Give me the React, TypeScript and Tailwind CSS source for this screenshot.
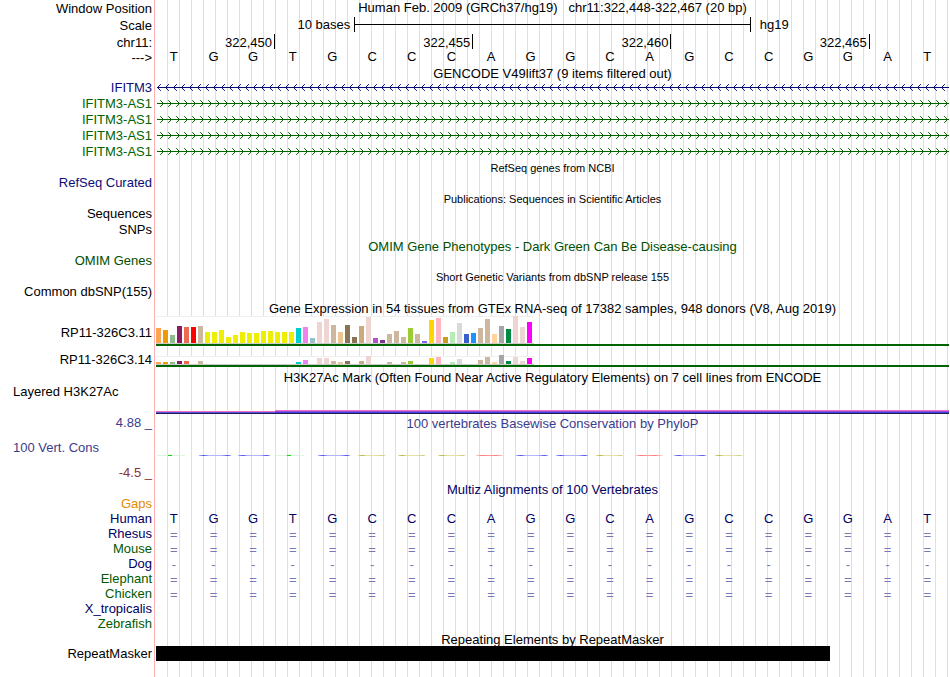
import type { ReactNode } from 'react';
import clsx from 'clsx';

const BASES = 'TGGTGCCCAGGCAGCCGGAT'.split('');

type Expression = { color: string; upper: number; lower: number };

const bar = (color: string, upper: number, lower = 0): Expression => ({ color, upper, lower });

// One bar per GTEx tissue, heights in pixels for the two genes
const TISSUES: Expression[] = [
    bar('#ffa54f', 15, 2),
    bar('#ee9a00', 13, 2),
    bar('#8fbc8f', 8, 2),
    bar('#8b1c62', 17, 3),
    bar('#ee6a50', 16, 3),
    bar('#ff0000', 16),
    bar('#cdb79e', 17, 3),
    ...[11, 11, 13, 6, 8, 11, 10, 10, 12, 12, 11, 11, 11].map((h) => bar('#eeee00', h)),
    bar('#00cdcd', 15, 2),
    bar('#ee82ee', 16, 4),
    bar('#9ac0cd', 5),
    bar('#eed5d2', 21, 6),
    bar('#eed5d2', 24, 6),
    bar('#cdb79e', 18, 3),
    bar('#eec591', 11, 2),
    bar('#8b7355', 18, 3),
    bar('#8b7355', 6),
    bar('#cdaa7d', 17, 3),
    bar('#eed5d2', 26, 8),
    bar('#b452cd', 5),
    bar('#7a378b', 3),
    bar('#cdb79e', 9, 2),
    bar('#cdb79e', 12),
    bar('#cdb79e', 6, 2),
    bar('#9acd32', 15, 3),
    bar('#cdb79e', 9),
    bar('#7a67ee', 2),
    bar('#ffd700', 23, 6),
    bar('#ffb6c1', 25, 7),
    bar('#cd9b1d', 6),
    bar('#b4eeb4', 11, 2),
    bar('#d9d9d9', 20, 5),
    bar('#3a5fcd', 9),
    bar('#1e90ff', 10),
    bar('#cdb79e', 15, 4),
    bar('#cdb79e', 24, 7),
    bar('#ffd39b', 9, 2),
    bar('#a6a6a6', 17, 9),
    bar('#008b45', 14, 3),
    bar('#eed5d2', 27, 7),
    bar('#eed5d2', 16, 3),
    bar('#ff00ff', 21, 6),
];

const CONSERVATION = [
    'green', 'blue', 'blue', 'green', 'blue', 'olive', 'olive', 'olive',
    'red', 'blue', 'blue', 'olive', 'red', 'blue', 'olive',
];

const SPECIES = [
    { name: 'Gaps', color: 'text-[#e68a00]', symbol: '' },
    { name: 'Human', color: 'text-[#000064]', symbol: 'bases' },
    { name: 'Rhesus', color: 'text-[#000064]', symbol: '=' },
    { name: 'Mouse', color: 'text-[#005a00]', symbol: '=' },
    { name: 'Dog', color: 'text-[#000064]', symbol: '-' },
    { name: 'Elephant', color: 'text-[#005a00]', symbol: '=' },
    { name: 'Chicken', color: 'text-[#005a00]', symbol: '=' },
    { name: 'X_tropicalis', color: 'text-[#000064]', symbol: '' },
    { name: 'Zebrafish', color: 'text-[#005a00]', symbol: '' },
];

type RowProps = {
    label?: string;
    labelClass?: string;
    className?: string;
    children?: ReactNode;
};

function Row({ label, labelClass, className = 'h-4 leading-4', children }: RowProps) {
    return (
        <div className={clsx('flex', className)}>
            <div className={clsx('w-[152px] shrink-0 whitespace-nowrap text-right', labelClass)}>{label}</div>
            <div className="ml-1 mr-px min-w-0 flex-1">{children}</div>
        </div>
    );
}

type TitleProps = { children: ReactNode; small?: boolean; className?: string };

function Title({ children, small, className }: TitleProps) {
    return (
        <h2 className={clsx('whitespace-pre text-center', small ? 'text-[11px]' : 'text-[13px]', className)}>
            {children}
        </h2>
    );
}

function Letters({ items, className }: { items: string[]; className?: string }) {
    return (
        <div className={clsx('-ml-0.5 mr-0.5 grid grid-cols-20 text-center', className)}>
            {items.map((item, i) => (
                <span key={i}>{item}</span>
            ))}
        </div>
    );
}

function Transcript({ id, reverse }: { id: string; reverse?: boolean }) {
    const color = reverse ? '#0c0c78' : '#006400';
    return (
        <svg className="block h-4 w-full" aria-hidden="true">
            <defs>
                <pattern id={id} width="8" height="16" patternUnits="userSpaceOnUse">
                    <path
                        d={reverse ? 'M4.5 4.5L1.5 7.5L4.5 10.5' : 'M4.5 4.5L7.5 7.5L4.5 10.5'}
                        fill="none"
                        stroke={color}
                        strokeWidth="1"
                        strokeLinecap="square"
                    />
                </pattern>
            </defs>
            <rect width="100%" height="16" fill={`url(#${id})`} />
            <rect x="1" y="7" width="100%" height="1" fill={color} />
        </svg>
    );
}

function ExpressionChart({ gene, className }: { gene: 'upper' | 'lower'; className: string }) {
    return (
        <div className="border-b-2 border-[#006400]">
            <div
                className={clsx(
                    'flex w-[378px] items-end gap-0.5 border-b border-t border-b-[#cccccc] border-t-[#f0f0f0] bg-white',
                    className,
                )}
            >
                {TISSUES.map((t, i) => (
                    <div key={i} className="w-[5px]" style={{ height: t[gene], backgroundColor: t.color }} />
                ))}
            </div>
        </div>
    );
}

export default function App() {
    return (
        <main className="min-h-screen overflow-hidden bg-white bg-[linear-gradient(to_right,#fff_0_154px,#ffb0b0_154px_155px,#fff_155px_156px,transparent_156px),repeating-linear-gradient(to_right,transparent_0_11px,#dcdcf8_11px_12px)] font-['Liberation_Sans',Arial,sans-serif] text-[13px] text-black">
            <Row label="Window Position" className="h-[17px] leading-[17px]">
                <h1 className="whitespace-pre text-center leading-[15px]">
                    {'Human Feb. 2009 (GRCh37/hg19)   chr11:322,448-322,467 (20 bp)'}
                </h1>
            </Row>
            <Row label="Scale" className="h-[17px] leading-[17px]">
                <div className="flex leading-4">
                    <span className="w-1/4 pr-1 text-right">10 bases</span>
                    <div className="flex h-[15px] w-1/2 items-center border-x border-black">
                        <div className="h-px w-full bg-black" />
                    </div>
                    <span className="pl-[9px]">hg19</span>
                </div>
            </Row>
            <Row label="chr11:" className="h-4 leading-[18px]">
                <div className="grid grid-cols-20 text-right">
                    <span className="col-span-3 h-[15px] border-r border-black pr-0.5">322,450</span>
                    <span className="col-span-5 h-[15px] border-r border-black pr-0.5">322,455</span>
                    <span className="col-span-5 h-[15px] border-r border-black pr-0.5">322,460</span>
                    <span className="col-span-5 h-[15px] border-r border-black pr-0.5">322,465</span>
                </div>
            </Row>
            <Row label="--->">
                <Letters items={BASES} className="leading-[14px]" />
            </Row>

            <Row className="h-[14px] leading-4">
                <Title>GENCODE V49lift37 (9 items filtered out)</Title>
            </Row>
            <Row label="IFITM3" labelClass="text-[#0c0c78]">
                <Transcript id="ifitm3" reverse />
            </Row>
            {[1, 2, 3, 4].map((n) => (
                <Row key={n} label="IFITM3-AS1" labelClass="text-[#006400]">
                    <Transcript id={`ifitm3-as1-${n}`} />
                </Row>
            ))}

            <Row className="h-[15px] leading-4">
                <Title small>RefSeq genes from NCBI</Title>
            </Row>
            <Row label="RefSeq Curated" labelClass="text-[#0c0c78]" />
            <Row className="h-[15px] leading-4">
                <Title small>Publications: Sequences in Scientific Articles</Title>
            </Row>
            <Row label="Sequences" />
            <Row label="SNPs" />
            <Row className="h-[15px] leading-[18px]">
                <Title className="text-[#005000]">OMIM Gene Phenotypes - Dark Green Can Be Disease-causing</Title>
            </Row>
            <Row label="OMIM Genes" labelClass="text-[#005000]" />
            <Row className="h-[15px] leading-4">
                <Title small>Short Genetic Variants from dbSNP release 155</Title>
            </Row>
            <Row label="Common dbSNP(155)" />

            <Row className="h-4 leading-[18px]">
                <Title>Gene Expression in 54 tissues from GTEx RNA-seq of 17382 samples, 948 donors (V8, Aug 2019)</Title>
            </Row>
            <Row label="RP11-326C3.11" className="h-[30px] leading-[33px]">
                <ExpressionChart gene="upper" className="h-7" />
            </Row>
            <Row label="RP11-326C3.14" className="h-[24px] leading-[27px]">
                <div className="pt-[10px]">
                    <ExpressionChart gene="lower" className="h-[9px]" />
                </div>
            </Row>

            <Row className="h-[15px] leading-4">
                <Title>H3K27Ac Mark (Often Found Near Active Regulatory Elements) on 7 cell lines from ENCODE</Title>
            </Row>
            <Row label="Layered H3K27Ac" labelClass="pl-[13px] !text-left leading-[14px]" className="h-[29px]">
                <div className="flex items-end pt-[25px]">
                    <div className="w-[15%]">
                        <div className="h-px bg-[#ee6fc8]" />
                        <div className="h-px bg-[#5a50e6]" />
                        <div className="h-px bg-[#1e1e50]" />
                    </div>
                    <div className="flex-1">
                        <div className="h-px bg-[#ee6fc8]" />
                        <div className="h-px bg-[#a048d8]" />
                        <div className="h-px bg-[#4040dc]" />
                        <div className="h-px bg-[#1e1e50]" />
                    </div>
                </div>
            </Row>

            <Row label="4.88 _" labelClass="text-[#3c3c8c]" className="h-[26px] leading-[18px]">
                <Title className="leading-5 text-[#3c3c8c]">100 vertebrates Basewise Conservation by PhyloP</Title>
            </Row>
            <Row label="100 Vert. Cons" labelClass="pl-[13px] !text-left text-[#3c3c8c]" className="h-[25px] leading-4">
                <div className="grid grid-cols-20 pt-[15px]">
                    {CONSERVATION.map((kind, i) => (
                        <div
                            key={i}
                            className={clsx('h-px', {
                                'ml-px w-7 bg-[linear-gradient(to_right,#dcf5dc_0_40%,#14dc14_40%_55%,#dcf5dc_55%)]': kind === 'green',
                                'ml-[3px] w-8 bg-[linear-gradient(to_right,#b4b4ff,#5050f0_15%,#b4b4ff_30%,#b4b4ff_70%,#5050f0_90%,#b4b4ff)]': kind === 'blue',
                                'ml-1 w-7 bg-[linear-gradient(to_right,#e1e1aa,#b4b43c_15%,#e1e1aa_30%,#e1e1aa_70%,#cdcd78_90%,#f5f5dc)]': kind === 'olive',
                                'ml-[3px] w-7 bg-[linear-gradient(to_right,#ffdcdc,#ff7878_20%,#ffa0a0_50%,#ff7878_70%,#ffdcdc)]': kind === 'red',
                            })}
                        />
                    ))}
                </div>
            </Row>
            <Row label="-4.5 _" labelClass="text-[#8c3232]" className="h-[17px] leading-4" />

            <Row className="h-[14px] leading-4">
                <Title className="text-[#000064]">Multiz Alignments of 100 Vertebrates</Title>
            </Row>
            {SPECIES.map(({ name, color, symbol }) => (
                <Row key={name} label={name} labelClass={color} className="h-[15px] leading-[15px]">
                    {symbol === 'bases' && <Letters items={BASES} className="text-[#000064]" />}
                    {symbol !== 'bases' && symbol !== '' && (
                        <Letters items={BASES.map(() => symbol)} className="leading-[17px] text-[#7878b4]" />
                    )}
                </Row>
            ))}

            <Row className="h-[15px] leading-[17px]">
                <Title>Repeating Elements by RepeatMasker</Title>
            </Row>
            <Row label="RepeatMasker" className="h-[15px] leading-[15px]">
                <div className="h-[15px] w-[85%] bg-black" />
            </Row>
        </main>
    );
}
